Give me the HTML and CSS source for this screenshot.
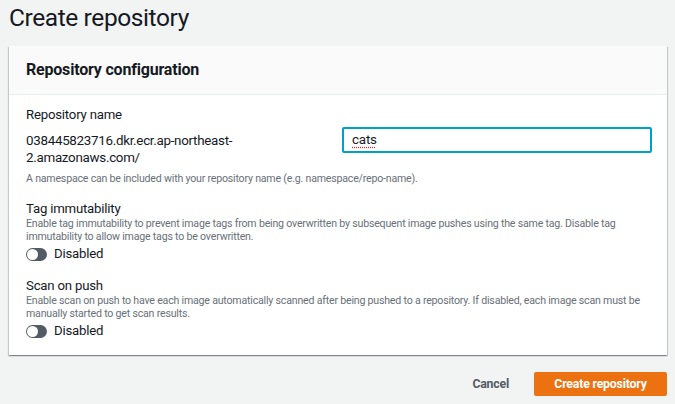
FILE: index.html
```html
<!DOCTYPE html>
<html lang="en">
<head>
<meta charset="utf-8">
<title>Create repository</title>
<link rel="stylesheet" href="styles.css">
</head>
<body>
<h1 class="page-title">Create repository</h1>
<section class="panel">
  <header class="panel-header">
    <h2 class="panel-title">Repository configuration</h2>
  </header>
  <div class="panel-body">
    <div class="field-label first">Repository name</div>
    <div class="name-row">
      <div class="prefix">038445823716.dkr.ecr.ap-northeast-<wbr>2.amazonaws.com/</div>
      <div class="text-input"><span class="misspelled">cats</span></div>
    </div>
    <div class="hint">A namespace can be included with your repository name (e.g. namespace/repo-name).</div>

    <div class="field-label section-gap">Tag immutability</div>
    <div class="desc">Enable tag immutability to prevent image tags from being overwritten by subsequent image pushes using the same tag. Disable tag immutability to allow image tags to be overwritten.</div>
    <div class="toggle-row"><span class="toggle"><span class="knob"></span></span><span class="toggle-text">Disabled</span></div>

    <div class="field-label section-gap">Scan on push</div>
    <div class="desc">Enable scan on push to have each image automatically scanned after being pushed to a repository. If disabled, each image scan must be manually started to get scan results.</div>
    <div class="toggle-row"><span class="toggle"><span class="knob"></span></span><span class="toggle-text">Disabled</span></div>
  </div>
</section>
<div class="actions">
  <button class="btn-link">Cancel</button>
  <button class="btn-primary">Create repository</button>
</div>
</body>
</html>
```
FILE: styles.css
```css
html, body {
  margin: 0;
  padding: 0;
  background: #f2f3f3;
  font-family: Roboto, "Liberation Sans", sans-serif;
  color: #16191f;
}
body {
  width: 675px;
  height: 404px;
  overflow: hidden;
}
.page-title {
  margin: 0;
  padding-left: 9px;
  font-size: 24.5px;
  letter-spacing: -0.4px;
  line-height: 36px;
  font-weight: 400;
}
.panel {
  margin: 10px 8px 0 9px;
  background: #fff;
  box-shadow: 0 1px 1px 0 rgba(0, 28, 36, 0.3), 1px 1px 1px 0 rgba(0, 28, 36, 0.15), -1px 1px 1px 0 rgba(0, 28, 36, 0.15);
}
.panel-header {
  height: 48px;
  background: #fafafa;
  border-bottom: 1px solid #eaeded;
  display: flex;
  align-items: center;
  padding-left: 17px;
}
.panel-title {
  margin: 0;
  font-size: 16px;
  letter-spacing: -0.2px;
  font-weight: 700;
  line-height: 20px;
}
.panel-body {
  padding: 10px 15px 14px 17px;
}
.field-label {
  font-size: 13.2px;
  letter-spacing: -0.2px;
  line-height: 16px;
}
.field-label.first {
  line-height: 20px;
}
.name-row {
  display: grid;
  grid-template-columns: 316px 1fr;
  margin-top: 2px;
}
.prefix {
  margin-top: 5px;
  font-size: 13.4px;
  letter-spacing: -0.3px;
  line-height: 17px;
  max-width: 240px;
}
.text-input {
  height: 26px;
  box-sizing: border-box;
  border: 2px solid #00a1c9;
  border-radius: 2px;
  padding: 0 8px;
  font-size: 13.4px;
  letter-spacing: -0.2px;
  line-height: 22px;
}
.misspelled {
  text-decoration: underline dotted #e0292f;
  text-underline-offset: 3px;
}
.hint {
  margin-top: 5px;
  font-size: 10.6px;
  letter-spacing: -0.2px;
  line-height: 16px;
  color: #687078;
}
.section-gap { margin-top: 14px; }
.desc {
  font-size: 10.6px;
  letter-spacing: -0.2px;
  line-height: 13px;
  color: #687078;
}
.toggle-row {
  margin-top: 1px;
  height: 20px;
  display: flex;
  align-items: center;
}
.toggle {
  position: relative;
  width: 21px;
  height: 13px;
  border-radius: 7px;
  background: #545b64;
}
.knob {
  position: absolute;
  left: 1px;
  top: 1px;
  width: 11px;
  height: 11px;
  border-radius: 50%;
  background: #fff;
}
.toggle-text {
  margin-left: 7px;
  font-size: 13.2px;
  letter-spacing: -0.2px;
  line-height: 20px;
}
.actions {
  display: flex;
  justify-content: flex-end;
  align-items: center;
  margin: 17px 8px 0 0;
}
.btn-link {
  border: 0;
  background: none;
  font-family: inherit;
  font-size: 12.3px;
  letter-spacing: -0.2px;
  font-weight: 700;
  color: #545b64;
  padding: 0;
  margin-right: 25px;
}
.btn-primary {
  border: 0;
  border-radius: 2px;
  background: #ec7211;
  color: #fff;
  font-family: inherit;
  font-size: 12.3px;
  letter-spacing: -0.2px;
  font-weight: 700;
  height: 24px;
  width: 133px;
  padding: 0;
}
```
